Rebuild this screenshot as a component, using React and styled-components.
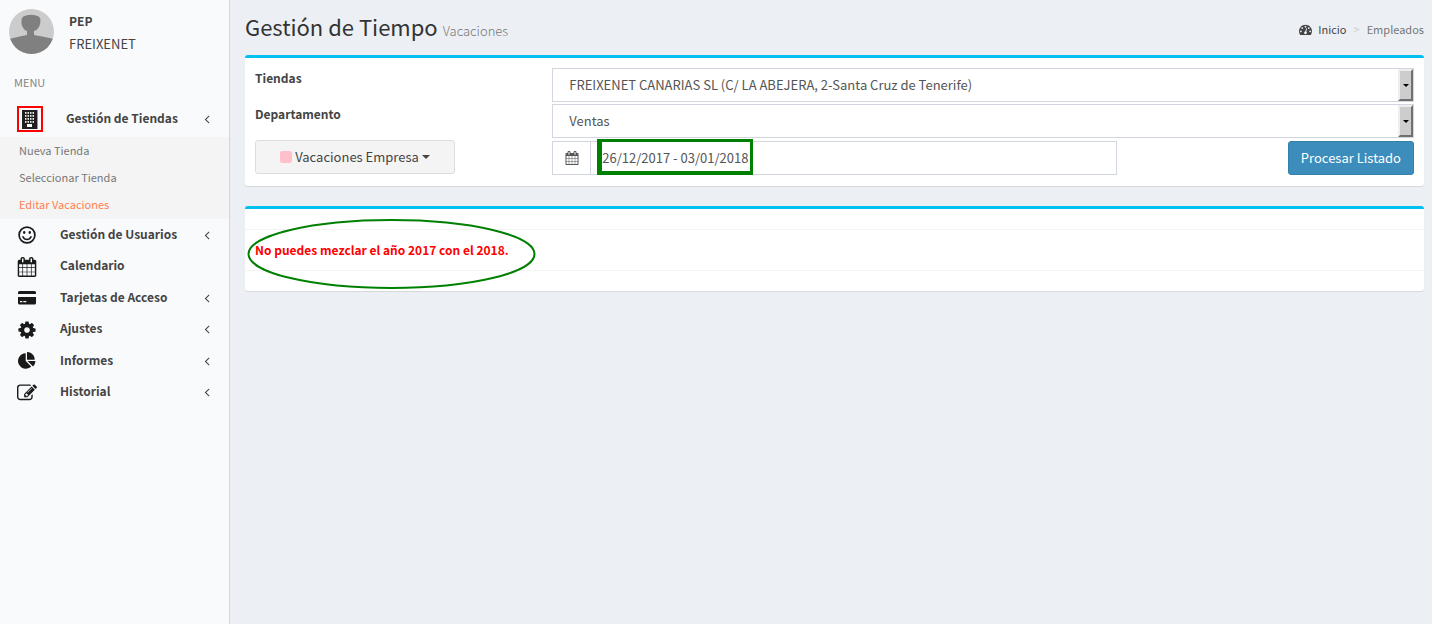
import React, { useState } from "react";
import styled, { createGlobalStyle } from "styled-components";

const GlobalStyle = createGlobalStyle`
  * {
    box-sizing: border-box;
  }

  body {
    margin: 0;
    background: #ecf0f5;
    color: #444;
    font-family: "Noto Sans CJK SC", "Noto Sans", sans-serif;
    font-size: 13px;
    line-height: 20px;
  }

  button,
  input,
  select {
    font: inherit;
    color: inherit;
  }

  a {
    color: inherit;
    text-decoration: none;
  }
`;

const Layout = styled.div`
  display: flex;
  min-height: 100vh;
`;

//sidebar
const Sidebar = styled.aside`
  flex: 0 0 230px;
  background: #f9fafc;
  border-right: 1px solid #d2d6de;
`;

const UserPanel = styled.div`
  display: flex;
  gap: 15px;
  padding: 9px 9px 0;
  height: 64px;

  svg {
    width: 45px;
    height: 45px;
  }

  p {
    margin: 2px 0 3px;
    font-size: 12px;
    font-weight: 700;
  }
`;

const MenuHeader = styled.div`
  padding: 8px 14px 9px;
  font-size: 11px;
  color: #848484;
`;

const Menu = styled.ul`
  list-style: none;
  margin: 0;
  padding: 0;
  display: grid;
  grid-template-rows: repeat(6, 1fr);
  min-height: 189px;
`;

const MenuLink = styled.a`
  display: flex;
  align-items: center;
  height: 100%;
  min-height: ${({ $active }) => ($active ? "36px" : "0")};
  padding: 0 15px 0 17px;
  font-size: 12px;
  font-weight: 700;

  .label {
    flex: 1;
    margin-left: 23px;
    padding-bottom: 2px;
  }
`;

const MenuIcon = styled.span`
  display: flex;
  align-items: center;
  justify-content: center;
  width: ${({ $marked }) => ($marked ? "26px" : "20px")};
  height: ${({ $marked }) => ($marked ? "26px" : "20px")};
  border: ${({ $marked }) => ($marked ? "2px solid #f00" : "0")};
  margin-top: ${({ $marked }) => ($marked ? "0" : "1px")};
  color: #1a1a1a;
`;

const SubMenu = styled.ul`
  list-style: none;
  margin: 0;
  padding: 0 0 1px 19px;
  background: #f4f4f5;
  font-size: 11px;

  a {
    display: block;
    padding: 3px 0 4px;
    color: #777;
  }

  a.current {
    color: #ff7f50;
  }
`;

//content
const Content = styled.main`
  flex: 1;
  min-width: 0;
  padding: 15px 8px 15px 15px;
`;

const ContentHeader = styled.header`
  display: flex;
  align-items: center;
  justify-content: space-between;
  height: 40px;
  padding-bottom: 12px;

  h1 {
    margin: 0 0 2px;
    font-size: 22px;
    font-weight: 400;
    line-height: 24px;
    color: #333;
  }

  small {
    font-size: 13px;
    font-weight: 300;
    color: #777;
  }
`;

const Breadcrumb = styled.nav`
  display: flex;
  align-items: center;
  gap: 7px;
  font-size: 11px;
  color: #777;

  a {
    display: flex;
    align-items: center;
    gap: 6px;
    color: #444;
  }

  .separator {
    color: #ccc;
  }
`;

const Box = styled.section`
  margin-bottom: 20px;
  background: #fff;
  border-top: 3px solid #00c0ef;
  border-radius: 3px;
  box-shadow: 0 1px 1px rgba(0, 0, 0, 0.1);
`;

const FilterForm = styled.form`
  display: grid;
  grid-template-columns: 1fr 3fr;
  gap: 2px 10px;
  padding: 10px;

  label {
    font-size: 12px;
    font-weight: 700;
  }
`;

const SelectWrap = styled.div`
  display: flex;
  height: 34px;
  border: 1px solid #d2d6de;
  background: #fff;
  position: relative;

  select {
    flex: 1;
    min-width: 0;
    appearance: none;
    border: 0;
    padding: 0 32px 0 16px;
    background: transparent;
    color: #555;
    outline: 0;
  }
`;

const SelectArrow = styled.span`
  position: absolute;
  top: 0;
  right: 0;
  bottom: 0;
  display: flex;
  align-items: center;
  justify-content: center;
  width: 15px;
  background: #cdcdcd;
  border: 2px solid;
  border-color: #eee #707070 #707070 #eee;
  color: #000;
  pointer-events: none;
`;

const Caret = styled.span`
  border-top: ${({ $size }) => $size}px solid;
  border-left: ${({ $size }) => $size}px solid transparent;
  border-right: ${({ $size }) => $size}px solid transparent;
`;

const FormCell = styled.div`
  display: flex;
  align-items: flex-start;
  height: 36px;
`;

const Actions = styled.div`
  display: grid;
  grid-template-columns: 2fr 1fr;
  align-items: center;
  gap: 15px;
  height: 36px;
`;

const Button = styled.button`
  display: flex;
  align-items: center;
  justify-content: center;
  height: 34px;
  padding: 0 12px;
  border: 1px solid ${({ $primary }) => ($primary ? "#367fa9" : "#ddd")};
  border-radius: 3px;
  background: ${({ $primary }) => ($primary ? "#3c8dbc" : "#f4f4f4")};
  color: ${({ $primary }) => ($primary ? "#fff" : "#444")};
  justify-self: end;
`;

const TypeButton = styled(Button)`
  width: 200px;
  gap: 3px;

  .swatch {
    width: 12px;
    height: 12px;
    border-radius: 2px;
    background: pink;
  }
`;

const InputGroup = styled.div`
  display: flex;
  height: 34px;
  border: 1px solid #d2d6de;
  position: relative;

  .addon {
    display: flex;
    align-items: center;
    justify-content: center;
    width: 38px;
    border-right: 1px solid #d2d6de;
    color: #555;
  }

  input {
    flex: 1;
    min-width: 0;
    border: 0;
    padding: 0 11px;
    background: transparent;
    color: #555;
    outline: 0;
  }
`;

const DateFrame = styled.span`
  position: absolute;
  top: -3px;
  left: 44px;
  width: 156px;
  height: 36px;
  border: solid #008000;
  border-width: 3px 3px 4px 5px;
  pointer-events: none;
`;

const BoxEdge = styled.div`
  height: 20px;
`;

const BoxMessage = styled.div`
  position: relative;
  padding: 10px;
  border-top: 1px solid #f4f4f4;
  border-bottom: 1px solid #f4f4f4;

  strong {
    font-size: 12px;
    color: #f00;
  }

  svg {
    position: absolute;
    top: -11px;
    left: 2px;
    width: 289px;
    height: 70px;
    pointer-events: none;
  }
`;

const Glyph = ({ d, size = 18 }) => (
  <svg width={size} height={size} viewBox="0 0 1792 1792" fill="currentColor">
    <path d={d} />
  </svg>
);

const calendarPath =
  "M192 1664h288v-288h-288v288zM544 1664h320v-288h-320v288zM192 1312h288v-320h-288v320zM544 1312h320v-320h-320v320zM192 928h288v-288h-288v288zM928 1664h320v-288h-320v288zM544 928h320v-288h-320v288zM1312 1664h288v-288h-288v288zM928 1312h320v-320h-320v320zM576 448v-288q0-13-9.500-22.500t-22.500-9.500h-64q-13 0-22.500 9.500t-9.500 22.500v288q0 13 9.500 22.500t22.500 9.500h64q13 0 22.500-9.500t9.500-22.500zM1312 1312h288v-320h-288v320zM928 928h320v-288h-320v288zM1312 928h288v-288h-288v288zM1344 448v-288q0-13-9.500-22.500t-22.500-9.500h-64q-13 0-22.500 9.500t-9.500 22.500v288q0 13 9.500 22.500t22.500 9.500h64q13 0 22.500-9.500t9.500-22.500zM1728 384v1280q0 52-38 90t-90 38h-1408q-52 0-90-38t-38-90v-1280q0-52 38-90t90-38h128v-96q0-66 47-113t113-47h64q66 0 113 47t47 113v96h384v-96q0-66 47-113t113-47h64q66 0 113 47t47 113v96h128q52 0 90 38t38 90z";
const cogPath =
  "M1152 896q0-106-75-181t-181-75-181 75-75 181 75 181 181 75 181-75 75-181zm512-109v222q0 12-8 23t-20 13l-185 28q-19 54-39 91 35 50 107 138 10 12 10 25t-9 23q-27 37-99 108t-94 71q-12 0-26-9l-138-108q-44 23-91 38-16 136-29 186-7 28-36 28h-222q-14 0-24.500-8.500t-11.500-21.500l-28-184q-49-16-90-37l-141 107q-10 9-25 9-14 0-25-11-126-114-165-168-7-10-7-23 0-12 8-23 15-21 51-66.500t54-70.500q-27-50-41-99l-183-27q-13-2-21-12.500t-8-23.500v-222q0-12 8-23t19-13l186-28q14-46 39-92-40-57-107-138-10-12-10-24 0-10 9-23 26-36 98.500-107.500t94.500-71.500q13 0 26 10l138 107q44-23 91-38 16-136 29-186 7-28 36-28h222q14 0 24.500 8.500t11.500 21.500l28 184q49 16 90 37l142-107q9-9 24-9 13 0 25 10 129 119 165 170 7 8 7 22 0 12-8 23-15 21-51 66.500t-54 70.500q26 50 41 98l183 28q13 2 21 12.500t8 23.500z";
const piePath =
  "M768 890l546 546q-106 108-247.500 168t-298.500 60q-209 0-385.500-103t-279.500-279.500-103-385.500 103-385.500 279.500-279.500 385.500-103v762zm187 6h773q0 157-60 298.500t-168 247.500zm709-128h-768v-768q209 0 385.500 103t279.500 279.500 103 385.500z";
const pencilPath =
  "M888 1184l116-116-152-152-116 116v56h96v96h56zm440-720q-16-16-33 1l-350 350q-17 17-1 33t33-1l350-350q17-17 1-33zm80 594v190q0 119-84.500 203.500t-203.500 84.500h-832q-119 0-203.500-84.500t-84.500-203.500v-832q0-119 84.500-203.500t203.500-84.500h832q63 0 117 25 15 7 18 23 3 17-9 29l-49 49q-14 14-32 8-23-6-45-6h-832q-66 0-113 47t-47 113v832q0 66 47 113t113 47h832q66 0 113-47t47-113v-126q0-13 9-22l64-64q15-15 35-7t20 29zm-96-738l288 288-672 672h-288v-288zm444 132l-92 92-288-288 92-92q28-28 68-28t68 28l152 152q28 28 28 68t-28 68z";
const anglePath =
  "M1203 544q0 13-10 23l-393 393 393 393q10 10 10 23t-10 23l-50 50q-10 10-23 10t-23-10l-466-466q-10-10-10-23t10-23l466-466q10-10 23-10t23 10l50 50q10 10 10 23z";
const gaugePath =
  "M384 1152q0-53-37.500-90.500t-90.500-37.500-90.500 37.500-37.500 90.500 37.500 90.500 90.500 37.500 90.500-37.500 37.500-90.500zm192-448q0-53-37.500-90.500t-90.500-37.500-90.500 37.500-37.500 90.500 37.500 90.500 90.500 37.500 90.500-37.500 37.500-90.500zm428 481l101-382q6-26-7.500-48.500t-38.500-29.500-48 6.500-30 39.500l-101 382q-60 5-107 43.500t-63 98.500q-20 77 20 146t117 89 146-20 89-117q16-60-6-117t-72-91zm660-33q0-53-37.500-90.500t-90.500-37.500-90.500 37.500-37.500 90.500 37.500 90.500 90.500 37.500 90.500-37.500 37.500-90.500zm-640-640q0-53-37.500-90.500t-90.500-37.500-90.500 37.500-37.500 90.500 37.500 90.500 90.500 37.500 90.500-37.500 37.500-90.500zm448 192q0-53-37.500-90.500t-90.500-37.500-90.500 37.500-37.500 90.500 37.500 90.500 90.500 37.500 90.500-37.500 37.500-90.500zm320 448q0 261-141 483-19 29-54 29h-1402q-35 0-54-29-141-221-141-483 0-182 71-348t191-286 286-191 348-71 348 71 286 191 191 286 71 348z";

const BuildingIcon = () => (
  <svg width="16" height="20" viewBox="0 0 16 20">
    <path d="M0 1h15v19H0z" fill="#221f20" />
    <path d="M15 1h1v19h-1z" fill="#6f9bd8" />
    {[3, 6, 9, 12].map((y) =>
      [3, 5.5, 8, 10.5].map((x) => (
        <rect key={`${x}-${y}`} x={x} y={y} width="1.500" height="1.800" fill="#eee" />
      ))
    )}
    <path d="M5 15h5v3H5z" fill="#fff" />
  </svg>
);

const SmileIcon = () => (
  <svg width="18" height="18" viewBox="0 0 18 18">
    <circle cx="9" cy="9" r="7.900" fill="none" stroke="currentColor" strokeWidth="1.700" />
    <ellipse cx="6.200" cy="6.500" rx="1.200" ry="1.400" fill="currentColor" />
    <ellipse cx="11.800" cy="6.500" rx="1.200" ry="1.400" fill="currentColor" />
    <path
      d="M5 10.800q1.200 2.700 4 2.700t4-2.700"
      fill="none"
      stroke="currentColor"
      strokeWidth="1.600"
      strokeLinecap="round"
    />
  </svg>
);

const CardIcon = () => (
  <svg width="18" height="14" viewBox="0 0 18 14">
    <path d="M1.500 0h15Q18 0 18 1.500V3H0V1.500Q0 0 1.500 0z" fill="currentColor" />
    <path
      d="M0 6h18v6q0 1.500-1.500 1.500h-15Q0 13.500 0 12zM2 10v1.300h2.300V10zM5.300 10v1.300h3V10z"
      fill="currentColor"
      fillRule="evenodd"
    />
  </svg>
);

const Avatar = () => (
  <svg viewBox="0 0 45 45" role="img" aria-label="PEP">
    <clipPath id="avatar">
      <circle cx="22.500" cy="22.500" r="22.500" />
    </clipPath>
    <g clipPath="url(#avatar)">
      <path d="M0 0h45v45H0z" fill="#ccc" />
      <path
        d="M12.500 11q0-5 9.500-5.300 9.500.3 9.500 5.300 0 4-1.500 7-1.500 3-5 4v4q9 1.500 20 4v15H0V30q10-2.500 18-4v-4q-3-1-4.500-4-1.500-3-1-7z"
        fill="#808080"
      />
    </g>
  </svg>
);

const menuItems = [
  { label: "Gestión de Usuarios", icon: <SmileIcon />, arrow: true },
  { label: "Calendario", icon: <Glyph d={calendarPath} size={20} /> },
  { label: "Tarjetas de Acceso", icon: <CardIcon />, arrow: true },
  { label: "Ajustes", icon: <Glyph d={cogPath} size={20} />, arrow: true },
  { label: "Informes", icon: <Glyph d={piePath} />, arrow: true },
  { label: "Historial", icon: <Glyph d={pencilPath} size={20} />, arrow: true },
];

const MenuItem = ({ label, icon, arrow, active }) => (
  <MenuLink href="#" $active={active}>
    <MenuIcon $marked={active}>{icon}</MenuIcon>
    <span className="label">{label}</span>
    {arrow && <Glyph d={anglePath} size={14} />}
  </MenuLink>
);

export default function App() {
  const [dates, setDates] = useState("26/12/2017 - 03/01/2018");

  return (
    <>
      <GlobalStyle />
      <Layout>
        <Sidebar>
          <UserPanel>
            <Avatar />
            <div>
              <p>PEP</p>
              <span>FREIXENET</span>
            </div>
          </UserPanel>
          <MenuHeader>MENU</MenuHeader>
          <nav>
            <MenuItem label="Gestión de Tiendas" icon={<BuildingIcon />} arrow active />
            <SubMenu>
              <li>
                <a href="#">Nueva Tienda</a>
              </li>
              <li>
                <a href="#">Seleccionar Tienda</a>
              </li>
              <li>
                <a href="#" className="current">
                  Editar Vacaciones
                </a>
              </li>
            </SubMenu>
            <Menu>
              {menuItems.map((item) => (
                <li key={item.label}>
                  <MenuItem {...item} />
                </li>
              ))}
            </Menu>
          </nav>
        </Sidebar>

        <Content>
          <ContentHeader>
            <h1>
              Gestión de Tiempo <small>Vacaciones</small>
            </h1>
            <Breadcrumb>
              <a href="#">
                <Glyph d={gaugePath} size={13} />
                Inicio
              </a>
              <span className="separator">&gt;</span>
              <span>Empleados</span>
            </Breadcrumb>
          </ContentHeader>

          <Box>
            <FilterForm onSubmit={(e) => e.preventDefault()}>
              <label htmlFor="tienda">Tiendas</label>
              <SelectWrap>
                <select id="tienda">
                  <option>
                    FREIXENET CANARIAS SL (C/ LA ABEJERA, 2-Santa Cruz de Tenerife)
                  </option>
                </select>
                <SelectArrow>
                  <Caret $size={3} />
                </SelectArrow>
              </SelectWrap>

              <label htmlFor="departamento">Departamento</label>
              <SelectWrap>
                <select id="departamento">
                  <option>Ventas</option>
                </select>
                <SelectArrow>
                  <Caret $size={3} />
                </SelectArrow>
              </SelectWrap>

              <FormCell>
                <TypeButton type="button">
                  <span className="swatch" />
                  Vacaciones Empresa
                  <Caret $size={4} />
                </TypeButton>
              </FormCell>
              <Actions>
                <InputGroup>
                  <span className="addon">
                    <Glyph d={calendarPath} size={14} />
                  </span>
                  <input
                    type="text"
                    aria-label="Fechas"
                    value={dates}
                    onChange={(e) => setDates(e.target.value)}
                  />
                  <DateFrame />
                </InputGroup>
                <Button type="submit" $primary>
                  Procesar Listado
                </Button>
              </Actions>
            </FilterForm>
          </Box>

          <Box>
            <BoxEdge />
            <BoxMessage>
              <strong>No puedes mezclar el año 2017 con el 2018.</strong>
              <svg viewBox="0 0 289 70">
                <ellipse cx="144.500" cy="35" rx="143" ry="34" fill="none" stroke="#008000" strokeWidth="2" />
              </svg>
            </BoxMessage>
            <BoxEdge />
          </Box>
        </Content>
      </Layout>
    </>
  );
}
